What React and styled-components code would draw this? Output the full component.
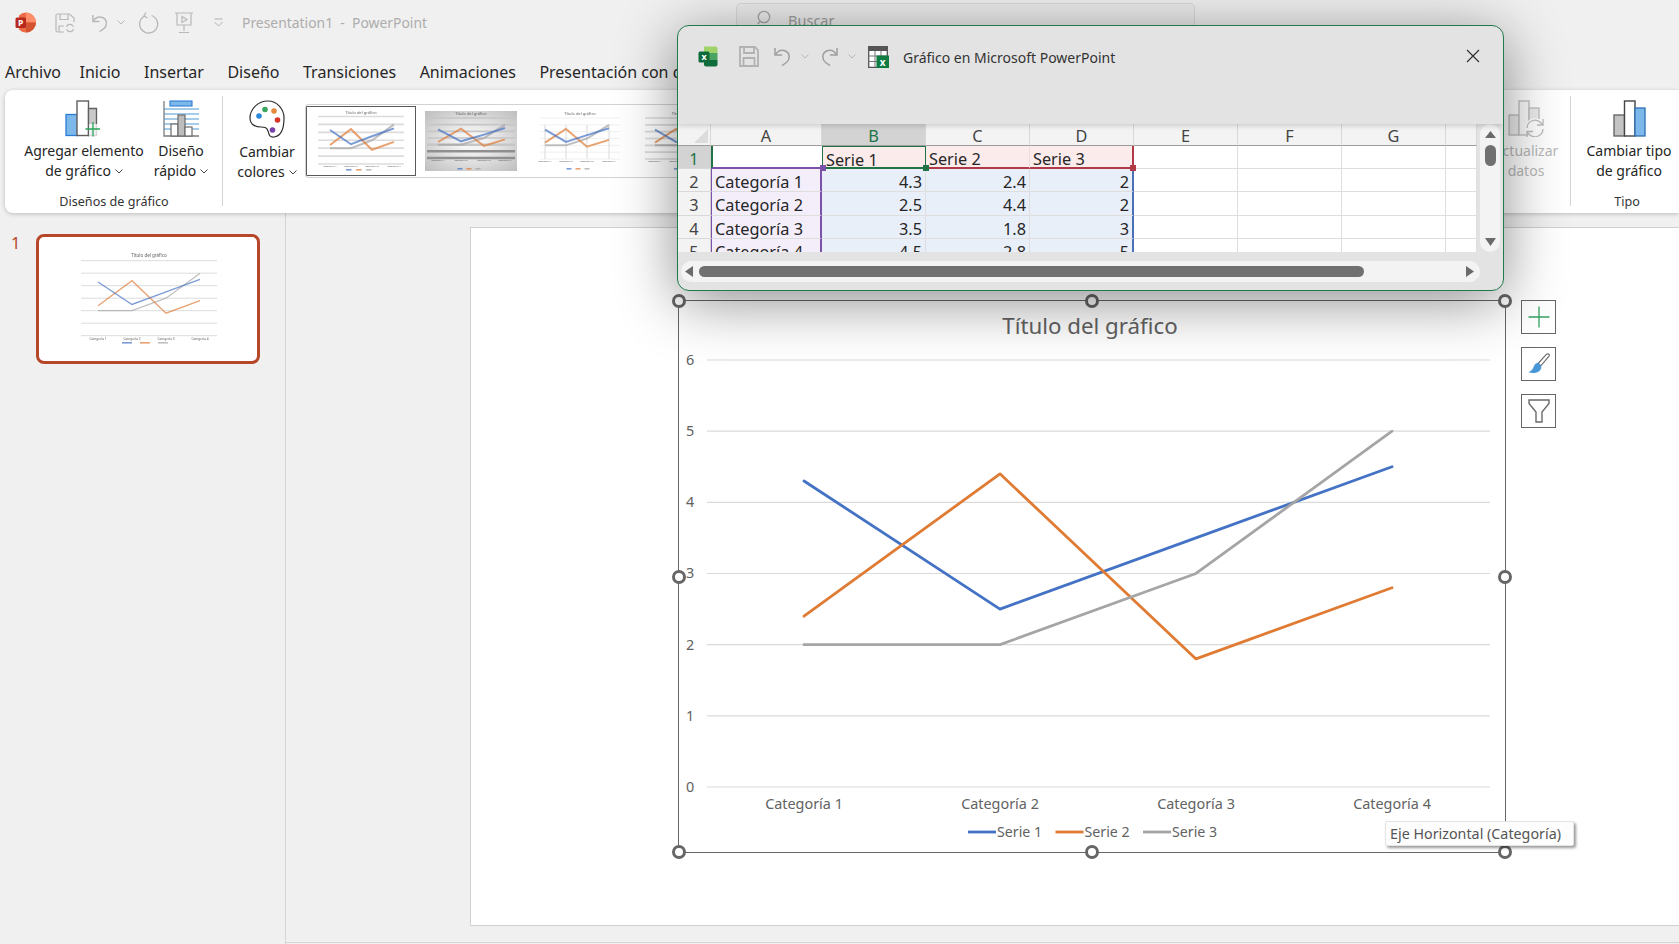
import React from 'react';
import styled, { createGlobalStyle } from 'styled-components';

const GlobalStyle = createGlobalStyle`
  html, body {
    margin: 0;
    padding: 0;
    width: 1679px;
    height: 944px;
    overflow: hidden;
    background: #f0f0f0;
    font-family: "Noto Sans", "Open Sans", sans-serif;
    color: #262626;
  }
`;

const BLUE = '#4472c4';
const ORANGE = '#e07b34';
const GRAY = '#a5a5a5';

const SERIES = [
  { name: 'Serie 1', color: BLUE, values: [4.3, 2.5, 3.5, 4.5] },
  { name: 'Serie 2', color: ORANGE, values: [2.4, 4.4, 1.8, 2.8] },
  { name: 'Serie 3', color: GRAY, values: [2, 2, 3, 5] },
];

const Page = styled.div`
  position: relative;
  width: 1679px;
  height: 944px;
  overflow: hidden;
  display: flex;
  flex-direction: column;
`;

/* title bar */
const TitleBar = styled.div`
  height: 45px;
  display: flex;
  align-items: center;
  flex: none;
`;

const TitleItem = styled.span`
  display: inline-flex;
  margin-left: ${p => p.$ml || 0}px;
  color: #b4b4b4;
`;

const AppTitle = styled.span`
  margin-left: ${p => p.$ml}px;
  font-size: 13.9px;
  color: #adadad;
  white-space: pre;
`;

const SearchBox = styled.div`
  align-self: flex-start;
  margin: 3px 0 0 309px;
  width: 459px;
  height: 34px;
  box-sizing: border-box;
  border: 1px solid #d9d9d9;
  border-radius: 5px;
  background: #ececec;
  display: flex;
  align-items: flex-start;
  padding: 6px 0 0 20px;
  gap: 15px;
  font-size: 14.5px;
  color: #9c9c9c;
`;

/* tabs */
const TabBar = styled.div`
  height: 45px;
  flex: none;
  display: flex;
  padding: 14px 0 0 5px;
  box-sizing: border-box;
  gap: 23.5px;
  font-size: 16px;
  line-height: 26px;
  color: #262626;
  white-space: nowrap;
`;

const Tab = styled.span`
  margin-left: ${p => p.$ml || 0}px;
`;

/* ribbon */
const Ribbon = styled.div`
  flex: none;
  height: 123px;
  margin-left: 5px;
  background: #fff;
  border-radius: 8px 0 0 8px;
  box-shadow: 0 1px 4px rgba(0, 0, 0, 0.22);
  display: flex;
  justify-content: space-between;
  position: relative;
  z-index: 2;
`;

const RibbonSide = styled.div`
  display: flex;
  align-items: stretch;
`;

const Group = styled.div`
  width: ${p => p.$width}px;
  position: relative;
  display: flex;
  flex-direction: column;
`;

const GroupButtons = styled.div`
  display: flex;
  height: 103px;
  padding-left: ${p => p.$pad || 0}px;
`;

const GroupLabel = styled.div`
  font-size: 12.6px;
  line-height: 18px;
  text-align: center;
  width: ${p => p.$width}px;
  color: #333;
`;

const Separator = styled.div`
  width: 1px;
  margin: 6px 0 7px;
  background: #d4d4d4;
`;

const RibbonButton = styled.div`
  width: ${p => p.$width}px;
  flex: none;
  display: flex;
  flex-direction: column;
  align-items: center;
  padding-top: 10px;
  box-sizing: border-box;
  color: ${p => (p.$disabled ? '#b8b8b8' : '#262626')};
`;

const ButtonLabel = styled.div`
  margin-top: 4px;
  font-size: 14px;
  line-height: 20px;
  text-align: center;
  white-space: nowrap;
`;

const Chevron = styled.svg`
  width: 8px;
  height: 5px;
  margin-left: 4px;
  vertical-align: 2px;
`;

const Gallery = styled.div`
  width: 395px;
  height: 74px;
  margin: 14px 0 0 4px;
  box-sizing: border-box;
  border: 1px solid #d2d2d2;
  border-right: 0;
  border-radius: 4px 0 0 4px;
  display: flex;
  align-items: center;
  overflow: hidden;
  flex: none;
`;

const GalleryThumb = styled.div`
  flex: none;
  width: ${p => p.$width}px;
  height: ${p => p.$height}px;
  margin-left: ${p => p.$ml}px;
  box-sizing: border-box;
  border: ${p => (p.$selected ? '1.5px solid #5a5a5a' : '0')};
  overflow: hidden;
  background: ${p =>
    p.$dark
      ? 'radial-gradient(ellipse at center, #f4f4f4 20%, #bdbdbd 100%)'
      : '#fff'};
  & svg {
    display: block;
    filter: blur(0.5px);
  }
`;

/* work area */
const Main = styled.div`
  flex: 1;
  min-height: 0;
  display: flex;
`;

const Sidebar = styled.div`
  width: 286px;
  flex: none;
  box-sizing: border-box;
  border-right: 1px solid #d4d4d4;
  display: flex;
  padding: 21px 0 0 11px;
`;

const SlideNumber = styled.div`
  width: 25px;
  font-size: 16.5px;
  line-height: 18px;
  color: #b7472a;
`;

const SlideThumb = styled.div`
  width: 224px;
  height: 130px;
  box-sizing: border-box;
  border: 3px solid #b7472a;
  border-radius: 8px;
  background: #fff;
  overflow: hidden;
  & svg {
    display: block;
    margin: -3px;
    filter: blur(0.4px);
  }
`;

const Workspace = styled.div`
  flex: 1;
  min-width: 0;
  display: flex;
  flex-direction: column;
`;

const Slide = styled.div`
  margin: 14px 0 0 184px;
  height: 699px;
  box-sizing: border-box;
  background: #fff;
  border: 1px solid #d0d0d0;
  border-right: 0;
  padding: 72px 0 0 207px;
  display: flex;
  gap: 15px;
  align-items: flex-start;
`;

const BottomStrip = styled.div`
  height: 16px;
  flex: none;
  border-bottom: 1px solid #d4d4d4;
`;

const ChartFrame = styled.div`
  position: relative;
  width: 828px;
  height: 553px;
  flex: none;
  box-sizing: border-box;
  border: 1.5px solid #666;
  & > svg {
    display: block;
    margin: -0.5px -1.5px -1.5px;
  }
`;

const ChartText = styled.text`
  font-family: "Noto Sans", "Open Sans", sans-serif;
  fill: #626262;
`;

const Handle = styled.span`
  position: absolute;
  width: 14px;
  height: 14px;
  box-sizing: border-box;
  border-radius: 50%;
  border: 3px solid #666;
  background: #fff;
  left: ${p => p.$x}%;
  top: ${p => p.$y}%;
  transform: translate(-50%, -50%);
`;

const ChartTools = styled.div`
  display: flex;
  flex-direction: column;
  gap: 13px;
`;

const ChartTool = styled.div`
  width: 35px;
  height: 34px;
  box-sizing: border-box;
  border: 1.5px solid #666;
  background: #fff;
  display: flex;
  align-items: center;
  justify-content: center;
`;

const Tooltip = styled.div`
  position: absolute;
  left: 1385px;
  top: 821px;
  width: 189px;
  height: 25px;
  box-sizing: border-box;
  background: #fdfdfd;
  border: 1px solid #e4e4e4;
  border-radius: 2px;
  box-shadow: 2px 2px 3px rgba(0, 0, 0, 0.4);
  font-size: 14.3px;
  line-height: 23px;
  padding-left: 4px;
  color: #555;
  white-space: nowrap;
  z-index: 6;
`;

/* excel window */
const ExcelWindow = styled.div`
  position: absolute;
  left: 677px;
  top: 25px;
  width: 827px;
  height: 266px;
  box-sizing: border-box;
  border: 1px solid #1f7a4a;
  border-radius: 12px;
  background: #e3e3e3;
  box-shadow: 0 10px 60px rgba(0, 0, 0, 0.45);
  overflow: hidden;
  display: flex;
  flex-direction: column;
  z-index: 5;
`;

const ExcelHead = styled.div`
  height: 98px;
  flex: none;
  display: flex;
  align-items: flex-start;
  padding: 20px 0 0 20px;
  box-sizing: border-box;
  position: relative;
  z-index: 2;
  box-shadow: 0 2px 5px rgba(0, 0, 0, 0.16);
`;

const ExcelIcon = styled.span`
  display: inline-flex;
  margin-left: ${p => p.$ml || 0}px;
  padding-top: ${p => p.$top || 0}px;
`;

const ExcelTitle = styled.span`
  margin-left: 14px;
  font-size: 14px;
  line-height: 23px;
  color: #333;
  white-space: nowrap;
`;

const CloseButton = styled.span`
  display: inline-flex;
  margin-left: auto;
  margin-right: 23px;
  margin-top: 3px;
`;

const ExcelBody = styled.div`
  height: 128px;
  flex: none;
  display: flex;
`;

const Sheet = styled.div`
  width: 799px;
  flex: none;
  display: grid;
  grid-template-columns: 33px 111px 104px 104px 104px 104px 104px 104px 31px;
  grid-auto-rows: 23.2px;
  grid-template-rows: 22px;
  overflow: hidden;
  background: #fff;
  font-size: 16.3px;
  line-height: 23px;
`;

const ColHead = styled.div`
  background: ${p => (p.$active ? '#d3d3d3' : '#f3f3f3')};
  color: ${p => (p.$active ? '#217346' : '#444')};
  border-right: 1px solid #d8d8d8;
  border-bottom: 1px solid #9d9d9d;
  text-align: center;
  box-sizing: border-box;
  position: relative;
  padding-top: 1px;
`;

const CornerMark = styled.span`
  position: absolute;
  right: 2px;
  bottom: 2px;
  border-style: solid;
  border-width: 0 0 14px 14px;
  border-color: transparent transparent #dcdcdc transparent;
`;

const RowHead = styled.div`
  background: ${p => (p.$active ? '#d3d3d3' : '#f3f3f3')};
  color: ${p => (p.$active ? '#217346' : '#444')};
  border-right: 1px solid #d0d0d0;
  border-bottom: 1px solid #d8d8d8;
  text-align: center;
  box-sizing: border-box;
  padding-top: 2px;
`;

const Cell = styled.div`
  position: relative;
  box-sizing: border-box;
  background: ${p => p.$bg || '#fff'};
  border-right: ${p => p.$right || '1px solid #dedede'};
  border-bottom: ${p => p.$bottom || '1px solid #dedede'};
  border-left: ${p => p.$left || '0'};
  border-top: ${p => p.$top || '0'};
  text-align: ${p => (p.$num ? 'right' : 'left')};
  padding: 2px 3px 0;
  color: #262626;
  white-space: nowrap;
`;

const RangeDot = styled.i`
  position: absolute;
  width: 6px;
  height: 6px;
  background: ${p => p.$color};
  right: -4px;
  bottom: -4px;
  z-index: 2;
`;

const VScroll = styled.div`
  width: 20px;
  margin-left: 3px;
  flex: none;
  background: #f3f3f3;
  border-radius: 10px;
  display: flex;
  flex-direction: column;
  align-items: center;
  padding-top: 7px;
  box-sizing: border-box;
`;

const VThumb = styled.div`
  width: 11px;
  height: 21px;
  margin-top: 7px;
  border-radius: 6px;
  background: #707070;
`;

const Spacer = styled.div`
  flex: 1;
`;

const ScrollArrow = styled.svg`
  display: block;
  flex: none;
  margin-bottom: ${p => p.$mb || 0}px;
`;

const HScroll = styled.div`
  height: 21px;
  width: 799px;
  margin: 9px 0 0 3px;
  flex: none;
  background: #f3f3f3;
  border-radius: 10px;
  display: flex;
  align-items: center;
  padding: 0 6px 0 4px;
  box-sizing: border-box;
`;

const HThumb = styled.div`
  width: 665px;
  height: 11px;
  margin-left: 6px;
  border-radius: 6px;
  background: #707070;
`;

/* drawings */
const MiniChart = ({ w, h, x0, x1, top, bottom, cats, title, legend, ...v }) => {
  const step = (bottom - top) / 6;
  const sy = val => bottom - val * step;
  const stroke = v.line || 1.2;
  return (
    <svg width={w} height={h} viewBox={`0 0 ${w} ${h}`}>
      {[0, 1, 2, 3, 4, 5, 6].map(i => (
        <line
          key={i}
          x1={x0}
          x2={x1}
          y1={sy(i)}
          y2={sy(i)}
          stroke={v.dark && i < 2 ? '#8f8f8f' : v.grid || '#dcdcdc'}
          strokeWidth={v.dark && i < 3 ? 2.5 : v.gridWidth || 1}
        />
      ))}
      {v.drops &&
        cats.map(c => <line key={c} x1={c} x2={c} y1={sy(5)} y2={bottom} stroke="#dfdfdf" strokeWidth="1.2" />)}
      {SERIES.slice().reverse().map(s => (
        <polyline
          key={s.name}
          fill="none"
          stroke={s.color}
          strokeOpacity="0.7"
          strokeWidth={stroke}
          points={s.values.map((val, i) => `${cats[i]},${sy(val)}`).join(' ')}
        />
      ))}
      <ChartText x={(x0 + x1) / 2} y={title} fontSize={v.titleSize || 4} textAnchor="middle">
        Título del gráfico
      </ChartText>
      {cats.map((c, i) => (
        <ChartText key={c} x={c} y={bottom + (v.catGap || 4)} fontSize={v.catSize || 3} textAnchor="middle">
          Categoría {i + 1}
        </ChartText>
      ))}
      {SERIES.map((s, i) => (
        <rect
          key={s.name}
          x={(x0 + x1) / 2 - (v.legendW || 14) * 1.5 + i * (v.legendW || 14)}
          y={legend}
          width={(v.legendW || 14) * 0.55}
          height={v.legendH || 1.6}
          fill={s.color}
          opacity="0.7"
        />
      ))}
    </svg>
  );
};

const BigChart = () => {
  const cats = [126, 322, 518, 714];
  const sy = val => 486 - val * 71.17;
  return (
    <svg width="827" height="551" viewBox="0 0 827 551">
      {[0, 1, 2, 3, 4, 5, 6].map(i => (
        <g key={i}>
          <line x1="29" x2="812" y1={sy(i)} y2={sy(i)} stroke="#dadada" strokeWidth="1.2" />
          <ChartText x="12" y={sy(i) + 5} fontSize="14.4" textAnchor="middle">{i}</ChartText>
        </g>
      ))}
      {SERIES.map(s => (
        <polyline
          key={s.name}
          fill="none"
          stroke={s.color}
          strokeWidth="2.8"
          strokeLinejoin="round"
          strokeLinecap="round"
          points={s.values.map((val, i) => `${cats[i]},${sy(val)}`).join(' ')}
        />
      ))}
      <ChartText x="412" y="33" fontSize="22.3" textAnchor="middle">Título del gráfico</ChartText>
      {cats.map((c, i) => (
        <ChartText key={c} x={c} y="508" fontSize="14.4" textAnchor="middle">Categoría {i + 1}</ChartText>
      ))}
      {SERIES.map((s, i) => (
        <g key={s.name}>
          <line x1={290 + i * 87.5} x2={318 + i * 87.5} y1="531" y2="531" stroke={s.color} strokeWidth="2.8" />
          <ChartText x={319 + i * 87.5} y="536" fontSize="14.2">{s.name}</ChartText>
        </g>
      ))}
    </svg>
  );
};

const PptLogo = () => (
  <svg width="21" height="21" viewBox="0 0 21 21">
    <path d="M11 0.5a10 10 0 0 1 0 20a10 10 0 0 1-7-3V3.5a10 10 0 0 1 7-3z" fill="#ed6c47" />
    <path d="M11 0.5a10 10 0 0 1 10 10H11z" fill="#ff8f6b" />
    <path d="M11 10.5h10a10 10 0 0 1-10 10z" fill="#d35230" />
    <rect x="0.5" y="5.5" width="10.5" height="10.5" rx="1.5" fill="#b7291c" />
    <text x="5.7" y="14" fontSize="8.5" fontWeight="700" fontFamily="Noto Sans, sans-serif" fill="#fff" textAnchor="middle">P</text>
  </svg>
);

const SaveSync = () => (
  <svg width="20" height="20" viewBox="0 0 20 20" fill="none" stroke="#b8b8b8" strokeWidth="1.2">
    <path d="M9 19H2.5A1.5 1.5 0 0 1 1 17.5v-15A1.5 1.5 0 0 1 2.5 1h12L19 5v4" />
    <path d="M5 1v5.5h8V1M4 19v-6h5" />
    <path d="M11.5 14a3.5 3.5 0 0 1 6-1.5l1 1M18.5 16a3.5 3.5 0 0 1-6 1.5l-1-1" />
  </svg>
);

const UndoIcon = ({ size = 19, color = '#b8b8b8', flip }) => (
  <svg width={size} height={size} viewBox="0 0 20 20" fill="none" stroke={color} strokeWidth="1.5" style={flip ? { transform: 'scaleX(-1)' } : undefined}>
    <path d="M2 2v7h7" />
    <path d="M2.5 8.5C5 4.5 9 3.5 12.5 5c5 2.5 4.5 8.5 1 11.5L9 19.5" />
  </svg>
);

const RedoRound = () => (
  <svg width="20" height="22" viewBox="0 0 20 22" fill="none" stroke="#b8b8b8" strokeWidth="1.3">
    <path d="M12.5 3.5A9 9 0 1 1 6 3.8" />
    <path d="M7 0.5L5 4l3.5 2" />
  </svg>
);

const PresentIcon = () => (
  <svg width="20" height="22" viewBox="0 0 20 22" fill="none" stroke="#b8b8b8" strokeWidth="1.2">
    <path d="M1 1h18M3 1v12h14V1M10 13v6M5 20.5h10" />
    <path d="M8 4.5l5 3-5 3z" />
  </svg>
);

const Caret = ({ color = '#b8b8b8' }) => (
  <svg width="8" height="5" viewBox="0 0 8 5" fill="none" stroke={color} strokeWidth="1">
    <path d="M0.5 0.5L4 4l3.5-3.5" />
  </svg>
);

const QatMore = () => (
  <svg width="9" height="9" viewBox="0 0 9 9" fill="none" stroke="#b0b0b0" strokeWidth="1">
    <path d="M0.5 1h8M0.5 4l4 4 4-4" />
  </svg>
);

const SearchIcon = () => (
  <svg width="16" height="16" viewBox="0 0 16 16" fill="none" stroke="#a6a6a6" strokeWidth="1.3">
    <circle cx="7" cy="7" r="5.7" />
    <path d="M3 11.5L0.8 14" />
  </svg>
);

const DownChevron = () => (
  <Chevron viewBox="0 0 8 5" fill="none" stroke="#444" strokeWidth="1">
    <path d="M0.5 0.5L4 4l3.5-3.5" />
  </Chevron>
);

const AddElementIcon = () => (
  <svg width="38" height="37" viewBox="0 0 38 37">
    <rect x="1" y="14.5" width="11.5" height="21" fill="#7cb8ea" stroke="#2b7cd3" strokeWidth="1.3" />
    <rect x="12" y="1" width="11.5" height="34.5" fill="#fff" stroke="#5f5f5f" strokeWidth="1.4" />
    <path d="M23.5 8.5h8v27h-8z" fill="#c8c8c8" stroke="#5f5f5f" strokeWidth="1.3" />
    <rect x="24" y="24" width="13" height="13" fill="#fff" opacity="0.75" />
    <path d="M28 22v14.5M20.5 29h14.5" stroke="#2aa35a" strokeWidth="1.3" />
  </svg>
);

const QuickLayoutIcon = () => (
  <svg width="37" height="37" viewBox="0 0 37 37" fill="none">
    <path d="M1 1v35h35" stroke="#7c7c7c" strokeWidth="1.3" />
    <rect x="7" y="1" width="22" height="5" fill="#7cb8ea" stroke="#2b7cd3" strokeWidth="1.1" />
    {[9, 14, 19, 24, 29].map(y => (
      <path key={y} d={`M1 ${y}h35`} stroke="#4a9ad6" strokeWidth="1.1" />
    ))}
    <rect x="8" y="24" width="7" height="12" fill="#fff" stroke="#6a6a6a" strokeWidth="1.2" />
    <rect x="15" y="15" width="7" height="21" fill="#bdbdbd" stroke="#6a6a6a" strokeWidth="1.2" />
    <rect x="22" y="27" width="7" height="9" fill="#fff" stroke="#6a6a6a" strokeWidth="1.2" />
  </svg>
);

const PaletteIcon = () => (
  <svg width="37" height="38" viewBox="0 0 37 38" fill="#fff" stroke="#2e2e2e" strokeWidth="1.2">
    <path d="M19 1c9 0 16 8 16 17 0 8-2 18-10 19-5 .5-5-3-6-6-1-4-4-4-7-4C7 27 1 25 1 18 1 9 9 1 19 1z" />
    <circle cx="10" cy="16" r="2.8" fill="#2b88d8" stroke="none" />
    <circle cx="16" cy="9.5" r="2.8" fill="#3aa55c" stroke="none" />
    <circle cx="25" cy="11" r="2.8" fill="#e3893b" stroke="none" />
    <circle cx="28.5" cy="20" r="2.8" fill="#d8352a" stroke="none" />
    <circle cx="23.5" cy="30" r="2.8" fill="#7a3fa8" stroke="none" />
  </svg>
);

const RefreshDataIcon = () => (
  <svg width="37" height="37" viewBox="0 0 37 37" fill="none" stroke="#bdbdbd" strokeWidth="1.3">
    <rect x="1" y="15" width="10" height="20" fill="#ececec" />
    <rect x="11" y="1" width="10" height="34" fill="#fafafa" />
    <rect x="21" y="8" width="10" height="19" fill="#ececec" />
    <circle cx="27" cy="28" r="10" fill="#fff" stroke="none" />
    <path d="M19 28a8 8 0 0 1 14-5l2 2M35 29a8 8 0 0 1-14 5l-2-2" />
    <path d="M35 19v6h-6M19 37v-5.5h6" />
  </svg>
);

const ChangeTypeIcon = () => (
  <svg width="33" height="37" viewBox="0 0 33 37">
    <rect x="1" y="15" width="10.5" height="21" fill="#c4c4c4" stroke="#5f5f5f" strokeWidth="1.3" />
    <rect x="11.5" y="1" width="10.5" height="35" fill="#fff" stroke="#444" strokeWidth="1.4" />
    <rect x="22" y="8" width="10" height="28" fill="#7cb8ea" stroke="#2b6fb3" strokeWidth="1.3" />
  </svg>
);

const ExcelLogo = () => (
  <svg width="20" height="21" viewBox="0 0 20 21">
    <path d="M6 0.5h11.5A2 2 0 0 1 19.5 2.5V7H6z" fill="#9fd36a" />
    <path d="M6 7h13.5v7H6z" fill="#4aa564" />
    <path d="M6 14h13.5v4.5a2 2 0 0 1-2 2H8a2 2 0 0 1-2-2z" fill="#106c3c" />
    <rect x="0.5" y="5.5" width="11" height="11" rx="1.5" fill="#0f6b3a" />
    <text x="6" y="14.2" fontSize="9" fontWeight="700" fontFamily="Noto Sans, sans-serif" fill="#fff" textAnchor="middle">x</text>
  </svg>
);

const SaveIcon = () => (
  <svg width="20" height="21" viewBox="0 0 20 21" fill="none" stroke="#b2b2b2" strokeWidth="1.8">
    <path d="M1 1h15l3 3v16H1z" />
    <path d="M5 1v6h10V1M4.5 20v-8h11v8" />
  </svg>
);

const SheetIcon = () => (
  <svg width="21" height="22" viewBox="0 0 21 22">
    <path d="M0.7 0.7h18.6v20.6H0.7z" fill="#fff" stroke="#555" strokeWidth="1.3" />
    <rect x="0.7" y="0.7" width="18.6" height="4.3" fill="#555" />
    <path d="M0.7 10h18.6M0.7 15.5h18.6M7 5v16M13 5v16" stroke="#777" strokeWidth="1" />
    <rect x="8.5" y="9.5" width="12.5" height="12.5" fill="#107c41" />
    <text x="14.7" y="19.5" fontSize="10" fontWeight="700" fontFamily="Noto Sans, sans-serif" fill="#fff" textAnchor="middle">x</text>
  </svg>
);

const CloseIcon = () => (
  <svg width="14" height="14" viewBox="0 0 14 14" stroke="#333" strokeWidth="1.2">
    <path d="M1 1l12 12M13 1L1 13" />
  </svg>
);

const PlusIcon = () => (
  <svg width="22" height="22" viewBox="0 0 22 22" stroke="#34a262" strokeWidth="1.3">
    <path d="M11 0.5v21M0.5 11h21" />
  </svg>
);

const BrushIcon = () => (
  <svg width="22" height="22" viewBox="0 0 24 24">
    <path d="M23 1.5c-1-1-2.5-.5-3.5.5L11 11.5l3 2.5 8.5-10c.8-1 1.2-2 .5-2.5z" fill="#fff" stroke="#666" strokeWidth="1.2" />
    <path d="M10.5 10.5c-3 .5-4 3.5-5 6-.8 1.8-3 3.5-5 4.5 4 1.5 9.5 1 12.5-2 1.5-1.5 2-4 1-6z" fill="#4a97d8" />
  </svg>
);

const FilterIcon = () => (
  <svg width="22" height="24" viewBox="0 0 22 24" fill="none" stroke="#6a6a6a" strokeWidth="1.4">
    <path d="M1 1h20v3.5L14 13v10H8V13L1 4.5z" />
  </svg>
);

const COLUMNS = ['A', 'B', 'C', 'D', 'E', 'F', 'G', ''];

const RED = '#b03a48';
const PURPLE = '#7b52a8';
const GREEN = '#217346';
const LINEBLUE = '#4a70b5';
const PINK = '#fbeceb';
const BLUEFILL = '#e9eff9';
const LILAC = '#f4eefa';

const HEADER_ROW = [
  { text: '', left: `2px solid ${GREEN}`, bottom: `2.5px solid ${PURPLE}`, right: '0', dot: PURPLE },
  { text: 'Serie 1', bg: PINK, top: `1.5px solid ${GREEN}`, left: `1.5px solid ${GREEN}`, right: `1.5px solid ${GREEN}`, bottom: `2.5px solid ${GREEN}`, dot: GREEN },
  { text: 'Serie 2', bg: PINK, bottom: `2.5px solid ${RED}`, right: '1px solid #eadede' },
  { text: 'Serie 3', bg: PINK, bottom: `2.5px solid ${RED}`, right: `2.5px solid ${RED}`, dot: RED },
];

const ROWS = [
  ['Categoría 1', '4.3', '2.4', '2'],
  ['Categoría 2', '2.5', '4.4', '2'],
  ['Categoría 3', '3.5', '1.8', '3'],
  ['Categoría 4', '4.5', '2.8', '5'],
];

const TABS = ['Archivo', 'Inicio', 'Insertar', 'Diseño', 'Transiciones', 'Animaciones', 'Presentación con diapositivas'];

const Excel = () => (
  <ExcelWindow>
    <ExcelHead>
      <ExcelIcon><ExcelLogo /></ExcelIcon>
      <ExcelIcon $ml={21}><SaveIcon /></ExcelIcon>
      <ExcelIcon $ml={14}><UndoIcon size={20} color="#9e9e9e" /></ExcelIcon>
      <ExcelIcon $ml={8} $top={8}><Caret /></ExcelIcon>
      <ExcelIcon $ml={10}><UndoIcon size={20} color="#9e9e9e" flip /></ExcelIcon>
      <ExcelIcon $ml={9} $top={8}><Caret /></ExcelIcon>
      <ExcelIcon $ml={12}><SheetIcon /></ExcelIcon>
      <ExcelTitle>Gráfico en Microsoft PowerPoint</ExcelTitle>
      <CloseButton><CloseIcon /></CloseButton>
    </ExcelHead>
    <ExcelBody>
      <Sheet>
        <ColHead><CornerMark /></ColHead>
        {COLUMNS.map(c => (
          <ColHead key={c || 'rest'} $active={c === 'B'}>{c}</ColHead>
        ))}
        <RowHead $active>1</RowHead>
        {HEADER_ROW.map((c, i) => (
          <Cell key={i} $bg={c.bg} $top={c.top} $left={c.left} $right={c.right} $bottom={c.bottom}>
            {c.text}
            {c.dot && <RangeDot $color={c.dot} />}
          </Cell>
        ))}
        {[0, 1, 2, 3].map(i => <Cell key={i} />)}
        {ROWS.map((row, r) => (
          <React.Fragment key={row[0]}>
            <RowHead>{r + 2}</RowHead>
            <Cell $bg={LILAC} $left={`1px solid ${PURPLE}`} $right={`2.5px solid ${PURPLE}`}>{row[0]}</Cell>
            <Cell $bg={BLUEFILL} $num>{row[1]}</Cell>
            <Cell $bg={BLUEFILL} $num>{row[2]}</Cell>
            <Cell $bg={BLUEFILL} $num $right={`2.5px solid ${LINEBLUE}`}>{row[3]}</Cell>
            {[0, 1, 2, 3].map(i => <Cell key={i} />)}
          </React.Fragment>
        ))}
      </Sheet>
      <VScroll>
        <ScrollArrow width="11" height="7" viewBox="0 0 11 7"><path d="M5.5 0L11 7H0z" fill="#6a6a6a" /></ScrollArrow>
        <VThumb />
        <Spacer />
        <ScrollArrow $mb={6} width="11" height="8" viewBox="0 0 11 8"><path d="M0 0h11L5.5 8z" fill="#6a6a6a" /></ScrollArrow>
      </VScroll>
    </ExcelBody>
    <HScroll>
      <ScrollArrow width="8" height="11" viewBox="0 0 8 11"><path d="M8 0v11L0 5.5z" fill="#6a6a6a" /></ScrollArrow>
      <HThumb />
      <Spacer />
      <ScrollArrow width="8" height="11" viewBox="0 0 8 11"><path d="M0 0v11l8-5.5z" fill="#6a6a6a" /></ScrollArrow>
    </HScroll>
  </ExcelWindow>
);

const HANDLES = [
  [0, 0], [50, 0], [100, 0],
  [0, 50], [100, 50],
  [0, 100], [50, 100], [100, 100],
];

const App = () => (
  <Page>
    <GlobalStyle />
    <TitleBar>
      <TitleItem $ml={15}><PptLogo /></TitleItem>
      <TitleItem $ml={19}><SaveSync /></TitleItem>
      <TitleItem $ml={16}><UndoIcon /></TitleItem>
      <TitleItem $ml={7}><Caret /></TitleItem>
      <TitleItem $ml={14}><RedoRound /></TitleItem>
      <TitleItem $ml={15}><PresentIcon /></TitleItem>
      <TitleItem $ml={20}><QatMore /></TitleItem>
      <AppTitle $ml={19}>Presentation1  -  PowerPoint</AppTitle>
      <SearchBox><SearchIcon />Buscar</SearchBox>
    </TitleBar>
    <TabBar>
      {TABS.map((t, i) => (
        <Tab key={t} $ml={i === 1 ? -5 : 0}>{t}</Tab>
      ))}
    </TabBar>
    <Ribbon>
      <RibbonSide>
        <Group $width={217}>
          <GroupButtons $pad={13}>
            <RibbonButton $width={132}>
              <AddElementIcon />
              <ButtonLabel>Agregar elemento<br />de gráfico<DownChevron /></ButtonLabel>
            </RibbonButton>
            <RibbonButton $width={62}>
              <QuickLayoutIcon />
              <ButtonLabel>Diseño<br />rápido<DownChevron /></ButtonLabel>
            </RibbonButton>
          </GroupButtons>
          <GroupLabel $width={218}>Diseños de gráfico</GroupLabel>
        </Group>
        <Separator />
        <Group $width={78}>
          <GroupButtons $pad={8}>
            <RibbonButton $width={72}>
              <PaletteIcon />
              <ButtonLabel>Cambiar<br />colores<DownChevron /></ButtonLabel>
            </RibbonButton>
          </GroupButtons>
        </Group>
        <Gallery>
          <GalleryThumb $width={110} $height={70} $ml={0} $selected>
            <MiniChart w={107} h={67} x0={11} x1={97} top={9.5} bottom={57} cats={[23, 44, 65, 87]} title={7} legend={62} line={2} gridWidth={1.6} catSize={2.5} catGap={3} legendW={10} />
          </GalleryThumb>
          <GalleryThumb $width={92} $height={60} $ml={9} $dark>
            <MiniChart w={92} h={60} x0={2} x1={90} top={7} bottom={47} cats={[13, 36, 59, 80]} title={4} legend={57} line={2} grid="#c6c6c6" gridWidth={1.6} dark catSize={2.5} catGap={3} legendW={9} />
          </GalleryThumb>
          <GalleryThumb $width={90} $height={60} $ml={18}>
            <MiniChart w={90} h={60} x0={5} x1={85} top={7} bottom={48} cats={[10, 31, 52, 74]} title={3.5} legend={57} line={2} grid="#f0f0f0" drops catSize={2.5} catGap={3} legendW={9} />
          </GalleryThumb>
          <GalleryThumb $width={60} $height={60} $ml={20}>
            <MiniChart w={90} h={60} x0={0} x1={85} top={7} bottom={48} cats={[10, 31, 52, 74]} title={3.5} legend={57} line={2} gridWidth={1.6} catSize={2.5} catGap={3} legendW={9} />
          </GalleryThumb>
        </Gallery>
      </RibbonSide>
      <RibbonSide>
        <Group $width={78}>
          <GroupButtons>
            <RibbonButton $width={68} $disabled>
              <RefreshDataIcon />
              <ButtonLabel>Actualizar<br />datos</ButtonLabel>
            </RibbonButton>
          </GroupButtons>
        </Group>
        <Separator />
        <Group $width={108}>
          <GroupButtons>
            <RibbonButton $width={116}>
              <ChangeTypeIcon />
              <ButtonLabel>Cambiar tipo<br />de gráfico</ButtonLabel>
            </RibbonButton>
          </GroupButtons>
          <GroupLabel $width={112}>Tipo</GroupLabel>
        </Group>
      </RibbonSide>
    </Ribbon>
    <Main>
      <Sidebar>
        <SlideNumber>1</SlideNumber>
        <SlideThumb>
          <MiniChart w={224} h={130} x0={45} x1={181} top={26.7} bottom={101.7} cats={[62, 96, 130, 164]} title={23} legend={108} line={1.3} titleSize={4.5} catSize={3.2} catGap={4} legendW={18} />
        </SlideThumb>
      </Sidebar>
      <Workspace>
        <Slide>
          <ChartFrame>
            <BigChart />
            {HANDLES.map(([x, y]) => <Handle key={`${x}-${y}`} $x={x} $y={y} />)}
          </ChartFrame>
          <ChartTools>
            <ChartTool><PlusIcon /></ChartTool>
            <ChartTool><BrushIcon /></ChartTool>
            <ChartTool><FilterIcon /></ChartTool>
          </ChartTools>
        </Slide>
        <BottomStrip />
      </Workspace>
    </Main>
    <Excel />
    <Tooltip>Eje Horizontal (Categoría)</Tooltip>
  </Page>
);

export default App;
